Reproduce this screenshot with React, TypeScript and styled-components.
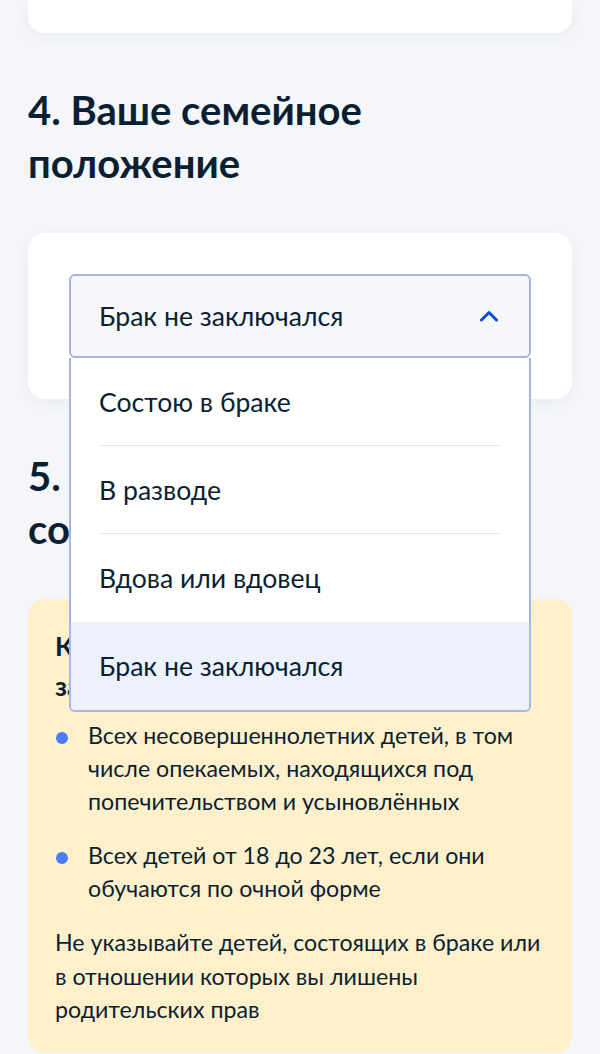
import styled, { createGlobalStyle } from "styled-components";

const GlobalStyle = createGlobalStyle`
  html, body {
    margin: 0;
    padding: 0;
    background: #f4f6fa;
  }
  body {
    font-family: Lato, "Noto Sans", sans-serif;
    color: #0b1f33;
  }
`;

const options = ["Состою в браке", "В разводе", "Вдова или вдовец", "Брак не заключался"];
const selected = "Брак не заключался";

export default function App() {
  return (
    <>
      <GlobalStyle />
      <Page>
        <TopCard />

        <Heading>4. Ваше семейное положение</Heading>
        <Card>
          <SelectWrap>
            <SelectBox>
              <span>{selected}</span>
              <Chevron width="20" height="12" viewBox="0 0 20 12">
                <polyline points="2.5,10 10,2.5 17.5,10" />
              </Chevron>
            </SelectBox>
            <Dropdown>
              {options.map((opt, i) => (
                <Option key={opt} $active={opt === selected}>
                  <OptionLabel $divider={i < 2}>{opt}</OptionLabel>
                </Option>
              ))}
            </Dropdown>
          </SelectWrap>
        </Card>

        <Heading>5. Информация о детях, состоящих на иждивении</Heading>
        <Notice>
          <NoticeTitle>
            Каких детей необходимо указать
            <br />
            заявителю
          </NoticeTitle>
          <List>
            <li>Всех несовершеннолетних детей, в том числе опекаемых, находящихся под попечительством и усыновлённых</li>
            <li>Всех детей от 18 до 23 лет, если они обучаются по очной форме</li>
          </List>
          <Text>
            Не указывайте детей, состоящих в браке или в отношении которых вы лишены родительских прав
          </Text>
        </Notice>
      </Page>
    </>
  );
}

const Page = styled.div`
  height: 1054px;
  overflow: hidden;
  padding: 0 28px;
  box-sizing: border-box;
`;

const TopCard = styled.div`
  height: 33px;
  background: #fff;
  border-radius: 0 0 16px 16px;
  box-shadow: 0 4px 16px rgba(11, 31, 51, 0.05);
`;

const Heading = styled.h2`
  margin: 51px 0 43px;
  font-size: 40px;
  line-height: 53px;
  font-weight: 700;
  color: #0b1f33;
`;

const Card = styled.div`
  background: #fff;
  border-radius: 16px;
  padding: 41px;
  box-shadow: 0 4px 16px rgba(11, 31, 51, 0.05);
`;

const SelectWrap = styled.div`
  position: relative;
  z-index: 2;
`;

const SelectBox = styled.div`
  height: 84px;
  box-sizing: border-box;
  border: 2px solid #a6b8e2;
  border-radius: 6px;
  background: #f5f7fa;
  display: flex;
  align-items: center;
  justify-content: space-between;
  padding: 0 30px 0 28px;
  font-size: 26.6px;
`;

const Chevron = styled.svg`
  fill: none;
  stroke: #0d4cd3;
  stroke-width: 3;
  stroke-linecap: round;
  stroke-linejoin: round;
`;

const Dropdown = styled.div`
  position: absolute;
  top: 100%;
  left: 0;
  right: 0;
  background: #fff;
  border: 2px solid #a6b8e2;
  border-top: none;
  border-radius: 0 0 6px 6px;
  overflow: hidden;
`;

const Option = styled.div<{ $active: boolean }>`
  padding: 0 28px;
  background: ${(p) => (p.$active ? "#ecf1fc" : "#fff")};
`;

const OptionLabel = styled.div<{ $divider: boolean }>`
  height: 88px;
  box-sizing: border-box;
  display: flex;
  align-items: center;
  font-size: 26.6px;
  border-bottom: 1px solid ${(p) => (p.$divider ? "#e2e4e8" : "transparent")};
`;

const Notice = styled.div`
  background: #fef0cb;
  border-radius: 16px;
  padding: 27px 24px 26px 27px;
`;

const NoticeTitle = styled.div`
  font-size: 26.6px;
  line-height: 40px;
  font-weight: 700;
  margin-bottom: 13px;
`;

const List = styled.ul`
  list-style: none;
  margin: 0;
  padding: 0;
  display: flex;
  flex-direction: column;
  gap: 21px;

  li {
    position: relative;
    padding-left: 33px;
    font-size: 23.2px;
    line-height: 33px;
  }

  li::before {
    content: "";
    position: absolute;
    left: 1px;
    top: 13px;
    width: 12px;
    height: 12px;
    border-radius: 50%;
    background: #4a7ef2;
  }
`;

const Text = styled.p`
  margin: 21px 0 0;
  font-size: 23.2px;
  line-height: 33.5px;
`;
